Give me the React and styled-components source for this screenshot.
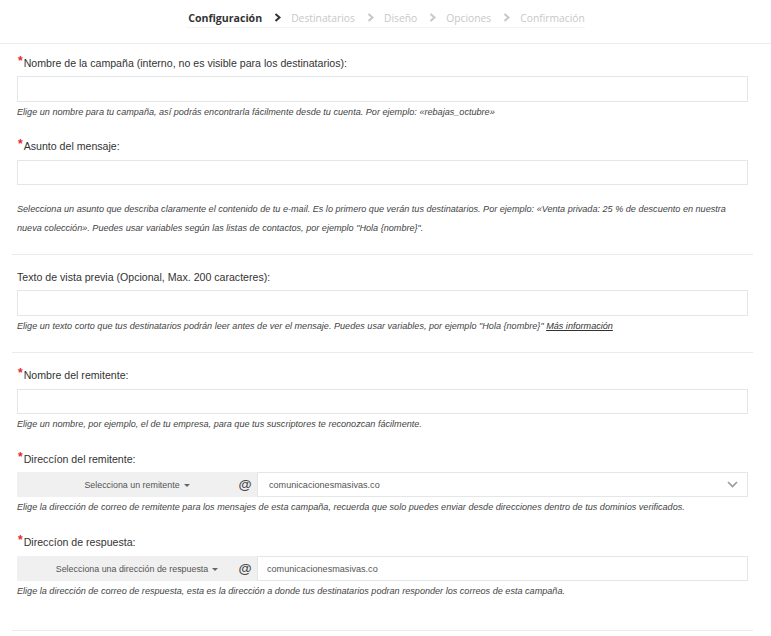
import styled, { createGlobalStyle } from "styled-components";

const GlobalStyle = createGlobalStyle`
  * { box-sizing: border-box; }
  body {
    margin: 0;
    background: #fff;
    font-family: Arial, "Liberation Sans", sans-serif;
    color: #333;
  }
`;

const Header = styled.div`
  height: 44px;
  border-bottom: 1px solid #e9ecec;
  display: flex;
  justify-content: center;
  align-items: flex-start;
`;
const Steps = styled.nav`
  display: flex;
  align-items: center;
  height: 28px;
  padding: 8px 0 0 2px;
  border-bottom: 1px solid #f4f4f4;
  font-family: "Open Sans", sans-serif;
`;
const Step = styled.span`
  font-size: ${(p) => (p.active ? "10.6px" : "10.3px")};
  color: ${(p) => (p.active ? "#333" : "#c8c8c8")};
  font-weight: ${(p) => (p.active ? 700 : 400)};
`;
const Chevron = styled.svg`
  width: 8px;
  height: 9px;
  margin: 0 9px 0 12px;
  color: ${(p) => (p.active ? "#333" : "#c8c8c8")};
`;

const Form = styled.div`
  margin: 0 18px 0 12px;
`;
const Section = styled.div`
  padding: ${(p) => p.pad || "0"};
  border-bottom: ${(p) => (p.line ? "1px solid #e9ecec" : "none")};
`;
const Group = styled.div`
  padding: 0 5px;
  margin-top: ${(p) => p.top || 0}px;
`;
const Label = styled.label`
  display: block;
  font-size: 10.6px;
  line-height: 17px;
  color: #333;
  margin-bottom: ${(p) => p.gap || 5}px;
`;
const Star = styled.span`
  color: #e3262e;
  font-size: 12px;
  font-weight: 700;
  position: relative;
  top: -2px;
  margin: 0 1px 0 1px;
`;
const Input = styled.input`
  display: block;
  width: 100%;
  height: ${(p) => p.h || 26}px;
  border: 1px solid #e4e7e7;
  border-radius: 0;
  background: #fff;
  outline: none;
`;
const Help = styled.p`
  margin: ${(p) => p.top || 4}px 0 0;
  font-size: 9.1px;
  font-style: italic;
  line-height: ${(p) => p.lh || 13}px;
  color: #444;
`;
const Link = styled.a`
  color: #333;
  text-decoration: underline;
`;

const AddonRow = styled.div`
  display: flex;
  height: 25px;
`;
const Addon = styled.div`
  width: 240px;
  flex: none;
  display: flex;
  align-items: center;
  background: #f0f0f0;
`;
const DropButton = styled.div`
  flex: 1;
  text-align: center;
  padding-left: 24px;
  font-size: 8.9px;
  color: #555;
`;
const Caret = styled.span`
  display: inline-block;
  width: 0;
  height: 0;
  margin-left: 4px;
  vertical-align: middle;
  border-left: 3px solid transparent;
  border-right: 3px solid transparent;
  border-top: 3px solid #666;
`;
const At = styled.span`
  width: 24px;
  text-align: center;
  font-size: 13.5px;
  font-weight: 700;
  color: #4a4a4a;
`;
const Field = styled.div`
  flex: 1;
  display: flex;
  align-items: center;
  justify-content: space-between;
  padding: 0 9px 0 ${(p) => p.left || 11}px;
  border: 1px solid #e4e7e7;
  font-size: 9.1px;
  color: #555;
`;

const ChevronDown = () => (
  <svg width="11" height="7" viewBox="0 0 11 7">
    <path d="M1 1l4.5 4.5L10 1" fill="none" stroke="#9a9a9a" strokeWidth="1.6" />
  </svg>
);

const Arrow = ({ active }) => (
  <Chevron active={active} viewBox="0 0 8 9">
    <path d="M1.5 1l4 3.5-4 3.5" fill="none" stroke="currentColor" strokeWidth="2" />
  </Chevron>
);

const subjectHelp =
  'Selecciona un asunto que describa claramente el contenido de tu e-mail. Es lo primero que verán tus destinatarios. Por ejemplo: «Venta privada: 25 % de descuento en nuestra nueva colección». Puedes usar variables según las listas de contactos, por ejemplo "Hola {nombre}".';
const previewHelp =
  'Elige un texto corto que tus destinatarios podrán leer antes de ver el mensaje. Puedes usar variables, por ejemplo "Hola {nombre}" ';

export default function App() {
  return (
    <>
      <GlobalStyle />
      <Header>
        <Steps>
          <Step active>Configuración</Step>
          <Arrow active />
          <Step>Destinatarios</Step>
          <Arrow />
          <Step>Diseño</Step>
          <Arrow />
          <Step>Opciones</Step>
          <Arrow />
          <Step>Confirmación</Step>
        </Steps>
      </Header>
      <Form>
        <Section line pad="11px 0 16px">
          <Group>
            <Label gap={4}>
              <Star>*</Star>Nombre de la campaña (interno, no es visible para los destinatarios):
            </Label>
            <Input />
            <Help>
              Elige un nombre para tu campaña, así podrás encontrarla fácilmente desde tu cuenta. Por ejemplo: «rebajas_octubre»
            </Help>
          </Group>
          <Group top={19}>
            <Label>
              <Star>*</Star>Asunto del mensaje:
            </Label>
            <Input h={25} />
            <Help top={15} lh={19}>
              {subjectHelp}
            </Help>
          </Group>
        </Section>
        <Section line pad="14px 0 19px">
          <Group>
            <Label gap={4}>Texto de vista previa (Opcional, Max. 200 caracteres):</Label>
            <Input />
            <Help>
              {previewHelp}
              <Link>Más información</Link>
            </Help>
          </Group>
        </Section>
        <Section line pad="14px 0 32px">
          <Group>
            <Label>
              <Star>*</Star>Nombre del remitente:
            </Label>
            <Input h={25} />
            <Help>
              Elige un nombre, por ejemplo, el de tu empresa, para que tus suscriptores te reconozcan fácilmente.
            </Help>
          </Group>
          <Group top={20}>
            <Label gap={4}>
              <Star>*</Star>Direccíon del remitente:
            </Label>
            <AddonRow>
              <Addon>
                <DropButton>
                  Selecciona un remitente<Caret />
                </DropButton>
                <At>@</At>
              </Addon>
              <Field>
                comunicacionesmasivas.co
                <ChevronDown />
              </Field>
            </AddonRow>
            <Help>
              Elige la dirección de correo de remitente para los mensajes de esta campaña, recuerda que solo puedes enviar desde direcciones dentro de tus dominios verificados.
            </Help>
          </Group>
          <Group top={20}>
            <Label gap={5}>
              <Star>*</Star>Direccíon de respuesta:
            </Label>
            <AddonRow>
              <Addon>
                <DropButton>
                  Selecciona una dirección de respuesta<Caret />
                </DropButton>
                <At>@</At>
              </Addon>
              <Field left={9}>comunicacionesmasivas.co</Field>
            </AddonRow>
            <Help>
              Elige la dirección de correo de respuesta, esta es la dirección a donde tus destinatarios podran responder los correos de esta campaña.
            </Help>
          </Group>
        </Section>
      </Form>
    </>
  );
}
